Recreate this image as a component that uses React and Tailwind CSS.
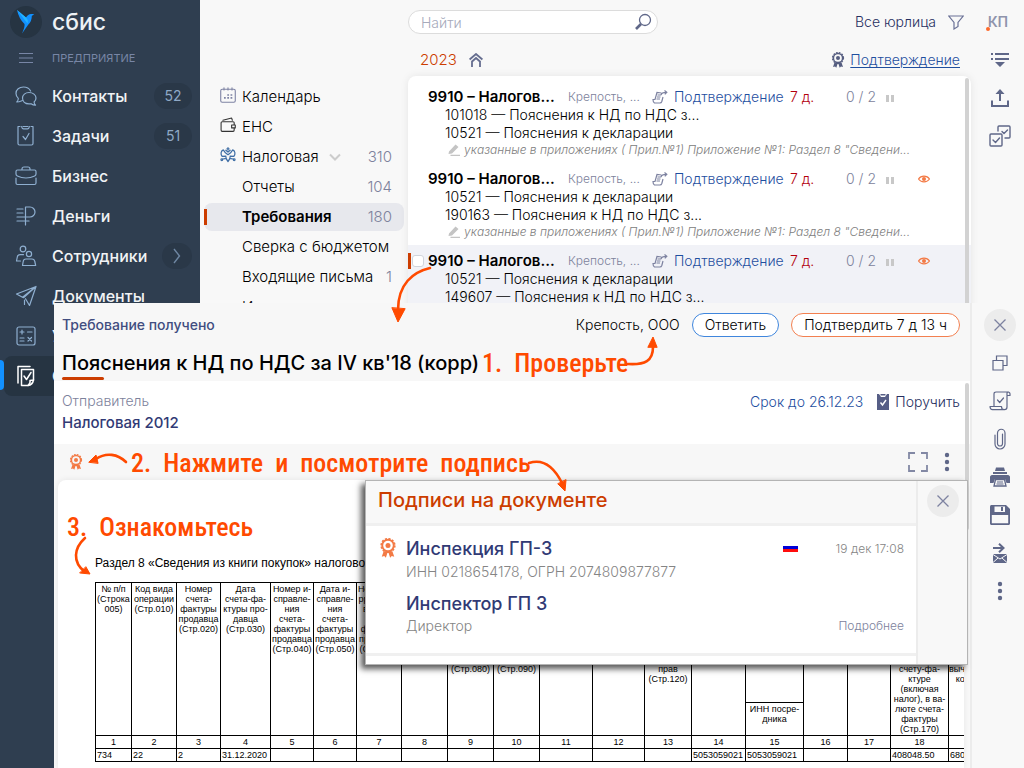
/**
 * Reporting workspace: requirement list, opened requirement and its signatures
 */

const menu = [
  { label: 'Контакты', icon: 'chat', badge: '52' },
  { label: 'Задачи', icon: 'task', badge: '51' },
  { label: 'Бизнес', icon: 'case' },
  { label: 'Деньги', icon: 'money' },
  { label: 'Сотрудники', icon: 'people', more: true },
  { label: 'Документы', icon: 'plane' },
  { label: 'Учет', icon: 'calc' },
  { label: 'Отчетность', icon: 'report', active: true },
];

const sections = [
  { label: 'Календарь', icon: 'calendar' },
  { label: 'ЕНС', icon: 'wallet' },
  { label: 'Налоговая', icon: 'eagle', count: '310', open: true },
  { label: 'Отчеты', count: '104' },
  { label: 'Требования', count: '180', active: true },
  { label: 'Сверка с бюджетом' },
  { label: 'Входящие письма', count: '1' },
  { label: 'Исходящие' },
];

const note = 'указанные в приложениях ( Прил.№1) Приложение №1: Раздел 8 "Сведени...';

const requirements = [
  { id: 1, lines: ['101018 — Пояснения к НД по НДС з...', '10521 — Пояснения к декларации'], note },
  { id: 2, lines: ['10521 — Пояснения к декларации', '190163 — Пояснения к НД по НДС з...'], note, seen: true },
  { id: 3, lines: ['10521 — Пояснения к декларации', '149607 — Пояснения к НД по НДС з...'], seen: true, selected: true },
];

const columns = [
  { w: 36, head: ['№ п/п', '(Строка', '005)'], value: '734' },
  { w: 45, head: ['Код вида', 'операции', '(Стр.010)'], value: '22' },
  { w: 44, head: ['Номер', 'счета-', 'фактуры', 'продавца', '(Стр.020)'], value: '2' },
  { w: 50, head: ['Дата', 'счета-фа-', 'ктуры про-', 'давца', '(Стр.030)'], value: '31.12.2020' },
  { w: 43, head: ['Номер и-', 'справле-', 'ния', 'счета-', 'фактуры', 'продавца', '(Стр.040)'] },
  { w: 43, head: ['Дата и-', 'справле-', 'ния', 'счета-', 'фактуры', 'продавца', '(Стр.050)'] },
  { w: 45, head: ['Номер ко-', 'рректиро-', 'вочного', 'счета-', 'фактуры', 'продавца', '(Стр.060)'] },
  { w: 46, head: [] },
  { w: 46, head: ['(Стр.080)'], low: true },
  { w: 46, head: ['(Стр.090)'], low: true },
  { w: 53, head: [] },
  { w: 52, head: [] },
  { w: 47, head: ['прав', '(Стр.120)'], low: true },
  { w: 54, head: [], value: '5053059021' },
  { w: 58, head: [], sub: ['ИНН посре-', 'дника'], value: '5053059021' },
  { w: 44, head: [] },
  { w: 43, head: [] },
  { w: 58, head: ['счету-фа-', 'ктуре', '(включая', 'налог), в ва-', 'люте счета-', 'фактуры', '(Стр.170)'], low: true, value: '408048.50' },
  { w: 52, head: ['вычету, в ру-', 'копейках'], low: true, value: '68008.08' },
];

function Svg({ size = 22, className = '', children, sw = 1.2 }) {
  return (
    <svg
      width={size}
      height={size}
      viewBox="0 0 22 22"
      fill="none"
      stroke="currentColor"
      strokeWidth={sw}
      strokeLinecap="round"
      strokeLinejoin="round"
      className={`shrink-0 ${className}`}
      aria-hidden="true"
    >
      {children}
    </svg>
  );
}

const menuIcons = {
  chat: (
    <>
      <path d="M7.500 15.500c-1.500.6-3.400 1.500-5.700 1.500 1.100-1 1.600-2.200 1.500-3.600C1.900 12 1 10.300 1 8.400 1 4.600 4.300 2 8.400 2c3.300 0 6 1.600 7.200 4" />
      <path d="M14 7.500c4 0 7 2.500 7 5.500 0 1.600-.7 3-1.900 4 0 1.200.5 2.200 1.400 3.200-2 0-3.400-.7-4.500-1.500-.6.200-1.300.2-2 .2-4 0-6.500-2.600-6.500-5.800S10.300 7.500 14 7.500z" />
    </>
  ),
  task: (
    <>
      <path d="M5 1.500H3v17c0 .8.600 1.500 1.500 1.500h12c.9 0 1.500-.7 1.500-1.500v-17h-2M8 1.500h5M6.500 1.500c.3 1.600 1 2.300 2 2.300h4c1 0 1.700-.7 2-2.300" />
      <path d="M8 11.500l2.500 3L14 8.500" />
    </>
  ),
  case: (
    <>
      <path d="M7 5V4c0-1.200.8-2 2-2h4c1.200 0 2 .8 2 2v1M2.500 5h17c.9 0 1.500.6 1.500 1.500V9c0 1-.5 1.600-1.300 2-2.700 1.300-5.600 2-8.700 2s-6-.7-8.700-2C1.500 10.600 1 10 1 9V6.500C1 5.600 1.600 5 2.500 5z" />
      <path d="M1 13v5c0 .9.700 1.500 1.500 1.500h17c.8 0 1.500-.6 1.500-1.500v-5" />
    </>
  ),
  money: <path d="M10.500 20V2H15a5 5 0 0 1 0 10h-4.500M2 4h6M2 8h6M2 12h12M2 16h12" />,
  people: (
    <>
      <circle cx="8" cy="4" r="2.800" />
      <circle cx="14" cy="9" r="2.600" />
      <path d="M7.500 20.500l.7-4c.2-1.700 1-2.500 2.700-2.500H17c1.700 0 2.500.8 2.800 2.500l.9 4zM5.500 16H1.500l.8-4c.3-1.500 1-2.300 2.700-2.300h3.500" />
    </>
  ),
  plane: <path d="M21 1.500L1.500 9l6 3.300zM21 1.500L8.500 12.700M21 1.500l-6.500 19-4-6.800M9.500 15v4.500" />,
  calc: (
    <>
      <rect x="2" y="2" width="18" height="18" rx="2" />
      <path d="M5 7h4M7 5v4M12.500 7H17M5 13h4M5 16h4M13 12.500l3.500 3.500M16.500 12.500L13 16" />
    </>
  ),
  report: (
    <g strokeWidth="1.500">
      <path d="M15 1.500H3V18M6.500 20.500V4.500h12V15c-1 .3-2.500.2-3.500.5.5 1.500-.5 3.500-2 5z" />
      <path d="M18.500 15c-.5 2.500-2.500 5-5.500 5.500M9 11l2.500 3.500L16 7.500" />
    </g>
  ),
};

const sectionIcons = {
  calendar: (
    <g className="text-[#7d82a3]">
      <rect x="1" y="3" width="20" height="18" rx="2" />
      <path d="M5.500 1v3M11 1v3M16.500 1v3" />
      <path strokeWidth="2.400" strokeLinecap="butt" d="M10 11h2.400M14.500 11h2.400M5.500 15h2.400M10 15h2.400M14.500 15h2.400" />
    </g>
  ),
  wallet: (
    <g className="text-[#333]">
      <path d="M19.500 11V8c0-1-.6-1.500-1.500-1.500H3C2 6.500 1.500 7 1.500 8v10c0 1 .6 1.800 1.500 1.800h15c.9 0 1.500-.8 1.500-1.800v-3M16 11h5v4h-5zM4 4.500l12-3 1 3" />
    </g>
  ),
  eagle: (
    <g className="text-[#3f6ea5]" strokeWidth="1.700">
      <path d="M11 1v3M9.500 2.500h3M8 4.500l3 2.500 3-2.500M7 7.500l4 3 4-3M4.500 4C1 5.500.5 10 3 13M17.500 4c3.500 1.500 4 6 1.500 9M4.500 4l2.500 3.500M17.500 4L15 7.500M3 13l5-.5M19 13l-5-.5M8 12.500c-.5 3 1 5 3 7.500 2-2.500 3.500-4.500 3-7.500M4 16.500l3-.5M18 16.500l-3-.5" />
      <circle cx="2.500" cy="17.500" r="1.200" />
      <circle cx="19.500" cy="17.500" r="1.200" />
    </g>
  ),
};

function Ribbon({ className = '', size = 16 }) {
  return (
    <svg width={size} height={size} viewBox="0 0 16 16" fill="none" stroke="currentColor" className={`shrink-0 ${className}`} aria-hidden="true">
      <circle cx="8" cy="6" r="4.600" strokeWidth="1.500" />
      <circle cx="8" cy="6" r="5.500" strokeWidth="1.200" strokeDasharray="1.700 1.200" />
      <circle cx="8" cy="6" r="2" fill="currentColor" stroke="none" />
      <path d="M4.500 10.500L3 15l2-.6 1.300 1.300L7.500 12h1l1.200 3.700L11 14.400l2 .6-1.500-4.500z" fill="currentColor" stroke="none" />
    </svg>
  );
}

function Cross() {
  return (
    <svg width="14" height="14" viewBox="0 0 14 14" stroke="#7d82a0" strokeWidth="1.300" aria-hidden="true">
      <path d="M1.500 1.500l11 11M12.500 1.500l-11 11" />
    </svg>
  );
}

function Dots() {
  return (
    <svg width="6" height="20" viewBox="0 0 6 20" fill="currentColor" aria-hidden="true">
      <circle cx="3" cy="3" r="2.200" />
      <circle cx="3" cy="10" r="2.200" />
      <circle cx="3" cy="17" r="2.200" />
    </svg>
  );
}

function Sidebar() {
  return (
    <aside className="w-[200px] shrink-0 bg-[#2f3e50] text-white">
      <div className="flex h-11 items-center gap-2.5 pl-2.5">
        <span className="flex size-8 items-center justify-center rounded-full bg-[#263442]">
          <svg width="18" height="24" viewBox="0 0 18 24" aria-hidden="true">
            <path d="M0 0l9 7.500Q11 4 14 4h3.300L14.800 6Q15 11 11 15L5 23.500Q8 17 7.500 14 2 9 0 0z" fill="#1291ff" />
            <path d="M0 0l9 7.500c2 2 2.200 4 1.500 6z" fill="#22b4ff" />
          </svg>
        </span>
        <span className="text-[23px] leading-8 font-medium text-[#eef2f5]">сбис</span>
      </div>
      <div className="mb-1 flex h-7 items-center gap-[18px] pl-[18px] text-[#7886a6]">
        <button type="button" aria-label="Меню">
          <svg width="16" height="12" viewBox="0 0 16 12" stroke="currentColor" strokeWidth="1.200" aria-hidden="true">
            <path d="M1 1.500h14M1 6h14M1 10.500h14" />
          </svg>
        </button>
        <span className="text-[11px]">ПРЕДПРИЯТИЕ</span>
      </div>
      <nav>
        {menu.map(item => (
          <a
            key={item.label}
            href="#"
            className={`relative flex h-10 items-center pr-2 ${item.active ? 'ml-1 rounded-l-lg bg-[#263442] pl-[11px]' : 'pl-[15px]'}`}
          >
            {item.active && <span className="absolute top-1 -left-1 h-[30px] w-1 rounded-r bg-[#1291ff]" />}
            <Svg className={item.active ? 'text-white' : 'text-[#8fafd0]'}>{menuIcons[item.icon]}</Svg>
            <span className="ml-[15px] flex-1 text-base font-medium text-[#f1f3f5]">{item.label}</span>
            {item.badge && (
              <span className="flex h-[26px] w-[38px] items-center justify-center rounded-full bg-[#2a3848] text-sm text-[#8fa9c6]">
                {item.badge}
              </span>
            )}
            {item.more && (
              <span className="flex h-[26px] w-[30px] items-center justify-center rounded-full bg-[#2a3848]">
                <svg width="8" height="16" viewBox="0 0 8 16" fill="none" stroke="#6f87a3" strokeWidth="1.400" aria-hidden="true">
                  <path d="M1 1l5.500 7L1 15" />
                </svg>
              </span>
            )}
          </a>
        ))}
      </nav>
    </aside>
  );
}

function Sections() {
  return (
    <nav className="w-[208px] shrink-0 px-1 pt-[82px] text-[15px] font-light text-black">
      {sections.map(item => (
        <div key={item.label} className="flex h-[30px] items-center">
          <a
            href="#"
            className={`relative flex h-7 flex-1 items-center pr-3 pl-4 whitespace-nowrap ${item.active ? 'rounded-lg bg-[#e7e8ed] font-semibold' : ''}`}
          >
            {item.active && <span className="absolute top-1.5 left-0 h-4 w-[3px] bg-[#cc3d00]" />}
            <span className="w-[22px] shrink-0">
              {item.icon && <Svg size={16} sw={1.5} className="-mt-1">{sectionIcons[item.icon]}</Svg>}
            </span>
            <span>{item.label}</span>
            {item.open && (
              <svg width="12" height="8" viewBox="0 0 12 8" fill="none" stroke="#ccc" strokeWidth="2" className="ml-2.5" aria-hidden="true">
                <path d="M1 1.500l5 5 5-5" />
              </svg>
            )}
            <span className="ml-auto text-[15px] font-light text-[#7d829c]">{item.count}</span>
          </a>
        </div>
      ))}
    </nav>
  );
}

function RequirementRow({ row }) {
  return (
    <article className={`relative h-[82px] pt-[7px] pl-5 text-sm leading-[18px] font-light text-black ${row.selected ? 'bg-[#f1f2f7]' : ''}`}>
      {row.selected && (
        <>
          <span className="absolute top-2 left-0 h-4 w-[3px] bg-[#cc3d00]" />
          <input
            type="checkbox"
            aria-label="Выбрать требование"
            className="absolute top-2.5 left-1 size-3 appearance-none rounded-[3px] border border-gray-300 bg-white"
          />
        </>
      )}
      <div className="flex items-center whitespace-nowrap">
        <span className="w-[140px] text-[15px] font-semibold">9910 – Налогов...</span>
        <span className="w-[84px] text-xs text-[#7d829c]">Крепость, ...</span>
        <svg width="16" height="14" viewBox="0 0 16 14" fill="none" stroke="#7d82a0" strokeWidth="1.200" className="mr-1.5 shrink-0" aria-hidden="true">
          <path d="M9.500 3L5 2.500 3 9.500H1c0 2 .5 3 1.500 3.500H8c1 0 1.500-.6 1.800-1.500L11 7M5.500 5H9M5 7h3.500M4.500 9H8M9 5c.5-2 2-2.700 5-2.700M12.500.5l2.300 1.800-2 2" />
        </svg>
        <a href="#" className="w-[116px] text-[#1f4f9f]">Подтверждение</a>
        <span className="w-14 text-[#b3000c]">7 д.</span>
        <span className="w-10 text-[#7d829c]">0 / 2</span>
        <span className="mt-0.5 flex w-8 gap-0.5">
          <i className="h-[7px] w-[3px] bg-[#c8c8c8]" />
          <i className="h-[7px] w-[3px] bg-[#c8c8c8]" />
        </span>
        {row.seen && (
          <svg width="12" height="8" viewBox="0 0 12 8" aria-hidden="true">
            <path d="M.5 4C3 .2 9 .2 11.500 4 9 7.800 3 7.800.5 4z" fill="none" stroke="#f37a45" strokeWidth="1.200" />
            <circle cx="6" cy="4" r="2" fill="#f37a45" />
          </svg>
        )}
      </div>
      {row.lines.map(line => (
        <p key={line} className="pl-[17px]">{line}</p>
      ))}
      {row.note && (
        <p className="flex items-center gap-1 pl-5 text-xs leading-4 whitespace-nowrap text-[#808080] italic">
          <svg width="12" height="12" viewBox="0 0 12 12" fill="#c4c4c4" aria-hidden="true">
            <path d="M1 7.500L7.500.5 10.500 3 4 9.500.5 10zM2.500 10.800H12V12H2.500z" />
          </svg>
          {row.note}
        </p>
      )}
    </article>
  );
}

function Rail({ children }) {
  return <div className="flex w-[52px] shrink-0 flex-col items-center pt-[3px] pl-1 text-[#5f6788]">{children}</div>;
}

function RailButton({ label, children }) {
  return (
    <button type="button" aria-label={label} className="flex h-[38px] w-10 items-center justify-center">
      {children}
    </button>
  );
}

function Registry() {
  return (
    <main className="min-w-0 flex-1 font-light">
      <header className="flex h-11 items-center justify-between pr-2">
        <label className="relative block w-[250px]">
          <input
            type="search"
            aria-label="Найти"
            placeholder="Найти"
            className="h-6 w-full rounded-full border border-[#dcdcdc] bg-white pr-8 pl-3 text-sm placeholder:text-[#a6aabb]"
          />
          <svg width="18" height="18" viewBox="0 0 18 18" fill="none" stroke="#5f6788" className="absolute top-[3px] right-1.5" aria-hidden="true">
            <circle cx="11" cy="7" r="5.500" strokeWidth="1.300" />
            <path d="M7 11l-5 5" strokeWidth="2.600" />
          </svg>
        </label>
        <button type="button" className="flex items-center gap-3 text-sm text-[#262f60]">
          Все юрлица
          <svg width="16" height="15" viewBox="0 0 16 15" fill="none" stroke="#6a7196" strokeWidth="1.200" aria-hidden="true">
            <path d="M.8 1h14.400L10 7.500v4L6 14V7.500z" />
          </svg>
        </button>
      </header>
      <div className="flex h-8 items-center pr-3 pl-3 text-sm">
        <span className="text-[15px] text-[#cc3d00]">2023</span>
        <svg width="14" height="14" viewBox="0 0 14 14" fill="none" stroke="#656d8f" strokeWidth="1.800" className="ml-3" aria-hidden="true">
          <path d="M.6 6.500L7 1l6.400 5.500M2.500 9L7 5l4.500 4M3 8v6M11 8v6" />
        </svg>
        <Ribbon className="ml-auto text-[#565e80]" />
        <a href="#" className="ml-1 text-[#1f4f9f] underline underline-offset-2">Подтверждение</a>
      </div>
      <section className="relative mr-px rounded-t-lg bg-white pt-[5px] shadow-[0_0_8px_rgba(0,0,0,0.08)]">
        {requirements.map(row => <RequirementRow key={row.id} row={row} />)}
        <span className="absolute top-0.5 right-0.5 bottom-0 w-1 rounded bg-[#d2d2d2]" />
      </section>
    </main>
  );
}

function PageRail() {
  return (
    <Rail>
      <RailButton label="Профиль">
        <span className="relative -left-0.5 font-[Roboto] text-[15px] font-medium text-[#8f94ac]">
          КП
          <i className="absolute bottom-0.5 -left-0.5 size-1 rounded-full bg-[#ff6a2b]" />
        </span>
      </RailButton>
      <RailButton label="Список">
        <svg width="20" height="18" viewBox="0 0 20 18" fill="currentColor" aria-hidden="true">
          <path d="M1 2h2v2H1zM5 2h14v2H5zM1 7h2v2H1zM5 7h14v2H5zM5 11h10l-5 5z" />
        </svg>
      </RailButton>
      <RailButton label="Выгрузить">
        <svg width="20" height="18" viewBox="0 0 20 18" fill="none" stroke="currentColor" strokeWidth="2" aria-hidden="true">
          <path d="M2 11.500V17h16v-5.500M10 12V3" />
          <path d="M5.500 5L10 0l4.500 5z" fill="currentColor" stroke="none" />
        </svg>
      </RailButton>
      <RailButton label="Выделить">
        <Svg size={22} sw={1.4}>
          <rect x="1" y="9" width="12" height="12" rx="1" />
          <path d="M9 6V2c0-.6.400-1 1-1h10c.6 0 1 .4 1 1v10c0 .6-.4 1-1 1h-4M4 15l2.500 2.500L10.500 13M13 6.500l2 2L18.500 5" />
        </Svg>
      </RailButton>
    </Rail>
  );
}

function PanelRail() {
  return (
    <Rail>
      <RailButton label="Закрыть">
        <span className="flex size-8 shrink-0 items-center justify-center rounded-full bg-[#ececec]"><Cross /></span>
      </RailButton>
      <RailButton label="В новом окне">
        <svg width="16" height="16" viewBox="0 0 16 16" fill="none" stroke="currentColor" strokeWidth="1.200" aria-hidden="true">
          <path d="M1 5.500h10V15H1zM4.500 5.500V1H15v9.500h-4" />
        </svg>
      </RailButton>
      <RailButton label="Прохождение">
        <Svg sw={1.2}>
          <path d="M5 16V4c0-1.300.700-2 2-2h12c1.300 0 2 .7 2 2v1.500h-3V17c0 1.700-1 2.700-2.500 2.700H3.500C2 19.700 1 18.500 1 16.500h11.500c0 2 1 3.200 2.500 3.200M18 5V3.500c0-.8.500-1.500 1.200-1.500M8.500 10l2.200 2.500L14.500 8" />
        </Svg>
      </RailButton>
      <RailButton label="Вложения">
        <Svg sw={1.2}>
          <path d="M13.500 6v9.500a2.500 2.500 0 0 1-5 0V5a3.700 3.700 0 0 1 7.500 0v11a5 5 0 0 1-10 0V7" />
        </Svg>
      </RailButton>
      <RailButton label="Печать">
        <svg width="20" height="20" viewBox="0 0 20 20" fill="currentColor" aria-hidden="true">
          <path d="M6 .5h8L15 4H5zM3 5h14v2H3zM2 8h16c1 0 2 1 2 2v6h-3.500L15 12H5l-1.500 4H0v-6c0-1 1-2 2-2z" />
          <path d="M5.500 12.500h9L16 19H4z" fill="#f8f8f8" stroke="currentColor" strokeWidth="1.300" />
          <path d="M7 14.500h6v1H7zM6.500 16.500h7v1h-7z" />
        </svg>
      </RailButton>
      <RailButton label="Сохранить">
        <svg width="20" height="20" viewBox="0 0 20 20" fill="currentColor" aria-hidden="true">
          <path d="M1.500 0H16l4 4v14.500c0 .8-.7 1.500-1.500 1.500h-17C.7 20 0 19.300 0 18.500v-17C0 .7.700 0 1.500 0z" />
          <path d="M4.500 1.500H15v5.500H4.500zM1.800 10h16.400v8.200H1.800z" fill="#f8f8f8" />
          <path d="M11 2h2v4h-2z" />
        </svg>
      </RailButton>
      <RailButton label="Отправить">
        <svg width="16" height="20" viewBox="0 0 16 20" fill="none" stroke="currentColor" strokeWidth="2" aria-hidden="true">
          <path d="M1 5h10M7 .8L11.500 5 7 9.200" />
          <path d="M1 11h14v9H1z" fill="currentColor" stroke="none" />
          <path d="M1 11.500l7 4.500 7-4.500M1 19.500l5-4.500M15 19.500L10 15" stroke="#f8f8f8" strokeWidth="1" />
        </svg>
      </RailButton>
      <RailButton label="Ещё"><Dots /></RailButton>
    </Rail>
  );
}

function PurchaseTable() {
  return (
    <table className="w-[905px] table-fixed border-collapse border border-black text-[9px] leading-[10px] text-black">
      <colgroup>
        {columns.map((col, i) => <col key={i} style={{ width: col.w }} />)}
      </colgroup>
      <thead>
        <tr className="h-[120px]">
          {columns.map((col, i) => (
            <th
              key={i}
              scope="col"
              rowSpan={col.sub ? 1 : 2}
              className={`border border-black px-0 pb-0 align-top font-normal whitespace-nowrap ${col.low ? 'pt-[81px]' : 'pt-px'}`}
            >
              {col.head.map(line => <div key={line}>{line}</div>)}
            </th>
          ))}
        </tr>
        <tr className="h-[33px]">
          {columns.filter(col => col.sub).map(col => (
            <th key="sub" scope="col" className="border border-black pt-px align-top font-normal whitespace-nowrap">
              {col.sub.map(line => <div key={line}>{line}</div>)}
            </th>
          ))}
        </tr>
        <tr className="h-[13px]">
          {columns.map((col, i) => (
            <th key={i} scope="col" className="border border-black p-0 font-normal">{i < 18 ? i + 1 : ''}</th>
          ))}
        </tr>
      </thead>
      <tbody>
        <tr className="h-[13px]">
          {columns.map((col, i) => (
            <td key={i} className="border border-black py-0 pl-px">{col.value}</td>
          ))}
        </tr>
      </tbody>
    </table>
  );
}

function Signatures() {
  return (
    <div
      role="dialog"
      aria-label="Подписи на документе"
      className="absolute top-[177px] right-14 left-[311px] flex h-[185px] border border-[#b4b4b4] bg-white shadow-[-4px_4px_6px_rgba(0,0,0,0.65)]"
    >
      <div className="min-w-0 flex-1">
        <h2 className="h-[45px] border-b-3 border-[#f0f0f0] bg-[#f8f8f8] pl-3 text-xl leading-[38px] font-medium text-[#cc3d00]">
          Подписи на документе
        </h2>
        <div className="flex h-[130px] border-b-3 border-[#f0f0f0] pt-3 pr-3 pl-3">
          <Ribbon size={20} className="text-[#f37a45]" />
          <div className="ml-2 flex-1 font-light">
            <div className="flex items-center">
              <h3 className="flex-1 text-lg leading-[22px] font-medium text-[#313a75]">Инспекция ГП-3</h3>
              <span className="mr-[38px] w-[15px] border-t-3 border-b-3 border-t-[#0000d8] border-b-[#ff0d0d]" />
              <time className="text-xs text-[#858585]">19 дек 17:08</time>
            </div>
            <p className="text-sm leading-6 text-[#858585]">ИНН 0218654178, ОГРН 2074809877877</p>
            <h3 className="mt-2 text-lg leading-6 font-medium text-[#313a75]">Инспектор ГП 3</h3>
            <div className="flex items-center justify-between">
              <span className="text-sm leading-5 text-[#858585]">Директор</span>
              <a href="#" className="text-xs text-[#7d829c]">Подробнее</a>
            </div>
          </div>
        </div>
      </div>
      <div className="flex w-[51px] justify-center border-l-2 border-[#ececec] bg-[#f8f8f8] pt-1">
        <button type="button" aria-label="Закрыть подписи" className="flex size-8 items-center justify-center rounded-full bg-[#ececec]">
          <Cross />
        </button>
      </div>
    </div>
  );
}

function RequirementPanel() {
  return (
    <section className="absolute inset-x-0 top-[303px] bottom-0 ml-[54px] flex bg-[#f8f8f8] font-light">
      <div className="relative flex min-w-0 flex-1 flex-col border-r-2 border-[#ececec]">
        <header className="h-[78px] bg-[#f7f7f7] pr-2.5 pl-2">
          <div className="flex h-11 items-center text-sm">
            <span className="flex-1 font-medium text-[#414d80]">Требование получено</span>
            <span className="mr-3 text-black">Крепость, ООО</span>
            <button type="button" className="mr-3 h-6 rounded-full border border-[#3f86dd] bg-white px-3 text-black">Ответить</button>
            <button type="button" className="h-6 rounded-full border border-[#f38050] bg-white px-3 text-black">Подтвердить 7 д 13 ч</button>
          </div>
          <h1 className="text-xl leading-8 font-medium text-black">Пояснения к НД по НДС за IV кв'18 (корр)</h1>
          <div className="h-[3px] w-[42px] -translate-y-0.5 rounded bg-[#cc3d00]" />
        </header>
        <div className="flex h-[63px] justify-between bg-white pt-[9px] pr-2.5 pl-2">
          <div className="text-sm leading-[22px]">
            <p className="text-[#7d829c]">Отправитель</p>
            <p className="text-[15px] font-medium text-[#313a75]">Налоговая 2012</p>
          </div>
          <div className="flex h-6 items-center text-sm">
            <span className="mr-3.5 text-[#1f4f9f]">Срок до 26.12.23</span>
            <svg width="12" height="16" viewBox="0 0 12 16" aria-hidden="true">
              <path d="M0 0h2l2 3h4l2-3h2v16H0z" fill="#565e86" />
              <path d="M3.500 0h5v1.500h-5z" fill="#565e86" />
              <path d="M3.500 8.500l2 2.500 3.500-5" fill="none" stroke="#fff" strokeWidth="1.400" />
            </svg>
            <a href="#" className="ml-1.5 text-[#262f60]">Поручить</a>
          </div>
        </div>
        <div className="flex h-9 items-center bg-[#f7f7f7] pr-5 pl-3.5">
          <Ribbon className="text-[#f37a45]" />
          <button type="button" aria-label="Развернуть" className="mr-4 ml-auto">
            <svg width="20" height="20" viewBox="0 0 20 20" fill="none" stroke="#8288a4" strokeWidth="1.800" aria-hidden="true">
              <path d="M1 7V1h6M13 1h6v6M19 13v6h-6M7 19H1v-6" />
            </svg>
          </button>
          <button type="button" aria-label="Действия" className="text-[#5f6788]"><Dots /></button>
        </div>
        <div className="mr-1.5 ml-1 min-h-0 flex-1 overflow-hidden rounded-tl-lg bg-white pl-[37px] font-['Liberation_Sans',sans-serif] shadow-[0_0_6px_rgba(0,0,0,0.08)]">
          <p className="pt-[75px] pb-[11px] text-xs leading-4 font-normal whitespace-nowrap text-black">
            Раздел 8 «Сведения из книги покупок» налоговой
          </p>
          <PurchaseTable />
        </div>
        <span className="absolute top-20 right-px h-[147px] w-1 rounded bg-[#d2d2d2]" />
      </div>
      <PanelRail />
      <Signatures />
    </section>
  );
}

function Hint({ className, words }) {
  return (
    <p className={`absolute flex gap-3 font-['Roboto_Condensed','Roboto',sans-serif] text-[26px] leading-8 font-medium whitespace-nowrap ${className}`}>
      {words.map(word => <span key={word}>{word}</span>)}
    </p>
  );
}

function Hints() {
  return (
    <div className="pointer-events-none absolute inset-0 text-[#ff4a00]">
      <Hint className="top-[347px] left-[482px]" words={['1.', 'Проверьте']} />
      <Hint className="top-[447px] left-[131px]" words={['2.', 'Нажмите', 'и', 'посмотрите', 'подпись']} />
      <Hint className="top-[511px] left-[67px]" words={['3.', 'Ознакомьтесь']} />
      <svg width="600" height="330" viewBox="60 260 600 330" className="absolute top-[260px] left-[60px]" fill="none" stroke="currentColor" strokeWidth="2.600" strokeLinecap="round" aria-hidden="true">
        <path d="M430 268c-17 4-32 16-32 42" />
        <path d="M628 364c17 1 25-3 25-17" />
        <path d="M126 462c-8-8-20-10-30-3" />
        <path d="M529 463c15-5 25 4 33 20" />
        <path d="M85 538c-11 10-13 24 0 34" />
        <path d="M392 308l6 14 7-13zM648 347l5-10 4 10zM89 462l7-7 2 8zM558 484l7 7 1-11zM80 573l10 1-4-7z" fill="currentColor" strokeWidth="1" />
      </svg>
    </div>
  );
}

export default function App() {
  return (
    <div className="relative flex h-screen overflow-hidden bg-[#f8f8f8] font-[Inter,sans-serif]">
      <Sidebar />
      <Sections />
      <Registry />
      <PageRail />
      <RequirementPanel />
      <Hints />
    </div>
  );
}
